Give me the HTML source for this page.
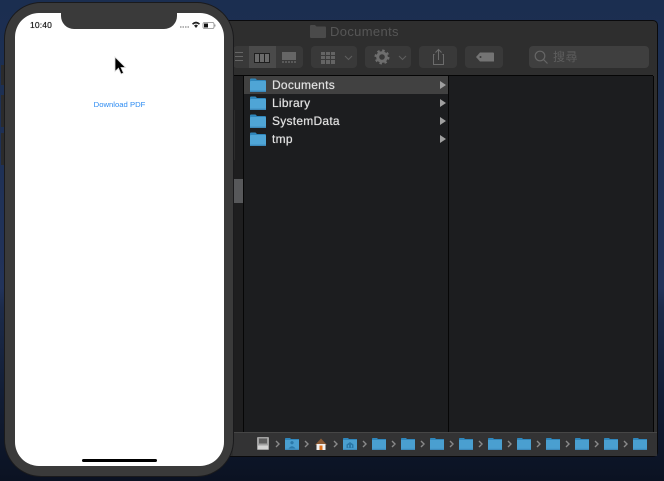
<!DOCTYPE html>
<html>
<head>
<meta charset="utf-8">
<style>
html,body{margin:0;padding:0}
body{width:664px;height:481px;position:relative;overflow:hidden;background:linear-gradient(180deg,#1b2e50 0,#22335a 60%,#1c2b4a 64%,#111c33 84%,#0b1222 100%);font-family:"Liberation Sans","Noto Sans CJK SC",sans-serif}
.a{position:absolute}
.row{position:absolute;left:244px;width:204px;height:18px;color:#e0e0e0;font-size:12px;line-height:18px;text-shadow:0 0 .6px #e0e0e0}
.row span{position:absolute;left:28px;top:0;letter-spacing:.25px}
.row i{position:absolute;left:196px;top:5px;width:0;height:0;border-left:6px solid #a0a0a0;border-top:4px solid transparent;border-bottom:4px solid transparent}
.btn{position:absolute;top:46px;height:22px;background:#393939;border-radius:4px}
</style>
</head>
<body>
<svg width="0" height="0" style="position:absolute"><defs>
<symbol id="f" viewBox="0 0 16 14"><path d="M0 1.500Q0 .5 1 .5H5.500L7 2H15Q16 2 16 3V13Q16 14 15 14H1Q0 14 0 13Z" fill="#2f86bb"/><rect y="3" width="16" height="11" rx="1" fill="#4fa5d6"/><rect y="12.600" width="16" height="1.400" fill="#3d8abb"/></symbol>
</defs></svg>

<!-- Finder window -->
<div class="a" style="left:200px;top:21px;width:457px;height:435px;background:#2e2e2e;border-radius:4px;box-shadow:0 0 0 1px #0a0a0c"></div>
<div class="a" style="left:233px;top:75px;width:420px;height:1px;background:#050505"></div>
<svg class="a" style="left:310px;top:25px" width="16" height="13"><path d="M0 1Q0 0 1 0H5L6.500 1.500H15Q16 1.500 16 2.500V12Q16 13 15 13H1Q0 13 0 12Z" fill="#4a4a4a"/></svg>
<div class="a" style="left:330px;top:24px;font-size:13px;line-height:16px;color:#565656;letter-spacing:.35px">Documents</div>

<!-- toolbar -->
<div class="btn" style="left:233px;width:70px;"></div>
<div class="a" style="left:249px;top:46px;width:27px;height:22px;background:#4a4a4a"></div>
<svg class="a" style="left:233px;top:46px" width="70" height="22">
<g fill="#666"><rect x="2" y="6" width="8" height="1"/><rect x="2" y="10" width="8" height="1"/><rect x="2" y="14" width="8" height="1"/></g>
<rect x="21.500" y="7.500" width="15" height="9" fill="#6a6a6a" stroke="#1e1e1e"/><path d="M26.500 7.500V16.500M31.500 7.500V16.500" stroke="#1e1e1e" fill="none"/>
<rect x="49" y="6" width="14" height="8" fill="#666"/><path d="M49 16H63" stroke="#666" stroke-dasharray="2 1" stroke-width="1.500"/>
</svg>
<div class="btn" style="left:311px;width:46px"></div>
<svg class="a" style="left:311px;top:46px" width="46" height="22">
<g fill="#646464"><rect x="10" y="6" width="4" height="3"/><rect x="15" y="6" width="4" height="3"/><rect x="20" y="6" width="4" height="3"/><rect x="10" y="10" width="4" height="3"/><rect x="15" y="10" width="4" height="3"/><rect x="20" y="10" width="4" height="3"/><rect x="10" y="14" width="4" height="4"/><rect x="15" y="14" width="4" height="4"/><rect x="20" y="14" width="4" height="4"/></g>
<path d="M34 10L37.500 13.500L41 10" fill="none" stroke="#5e5e5e" stroke-width="1.100"/></svg>
<div class="btn" style="left:365px;width:46px"></div>
<svg class="a" style="left:365px;top:46px" width="46" height="22">
<circle cx="17" cy="11" r="4.300" fill="none" stroke="#6e6e6e" stroke-width="3"/><circle cx="17" cy="11" r="6.500" fill="none" stroke="#6e6e6e" stroke-width="2" stroke-dasharray="2.500 2.600"/>
<path d="M34 10L37.500 13.500L41 10" fill="none" stroke="#5e5e5e" stroke-width="1.100"/></svg>
<div class="btn" style="left:419px;width:38px"></div>
<svg class="a" style="left:419px;top:46px" width="38" height="22" fill="none" stroke="#6c6c6c" stroke-width="1">
<path d="M15.500 8.500H14.500V18.500H24.500V8.500H23.500M19.500 14V4M16.500 6.500L19.500 3.500L22.500 6.500"/></svg>
<div class="btn" style="left:465px;width:38px"></div>
<svg class="a" style="left:465px;top:46px" width="38" height="22"><path d="M11 11L15 6.500H28Q29 6.500 29 7.500V15.500H15Z" fill="#747474"/><circle cx="15.500" cy="11" r="1" fill="#393939"/></svg>
<div class="btn" style="left:529px;width:120px;background:#3f3f3f"></div>
<svg class="a" style="left:529px;top:46px" width="30" height="22" fill="none" stroke="#666" stroke-width="1.200"><circle cx="11" cy="10" r="4.800"/><path d="M14.500 13.500L18.500 17.500"/></svg>
<div class="a" style="left:553px;top:50px;font-size:12px;line-height:14px;color:#5e5e5e;letter-spacing:.5px">搜尋</div>

<!-- content -->
<div class="a" style="left:233px;top:76px;width:420px;height:356px;background:#1c1d1f"></div>
<div class="a" style="left:233px;top:76px;width:10px;height:356px;background:#1e1e1f"></div>
<div class="a" style="left:234px;top:179px;width:9px;height:24px;background:#57585a"></div>
<div class="a" style="left:243px;top:76px;width:1px;height:356px;background:#060606"></div>
<div class="a" style="left:448px;top:76px;width:1px;height:356px;background:#060606"></div>
<div class="a" style="left:653px;top:76px;width:1px;height:356px;background:#050505"></div>
<div class="a" style="left:244px;top:76px;width:204px;height:18px;background:#414141"></div>

<div class="row" style="top:76px"><span>Documents</span><i></i></div>
<div class="row" style="top:94px"><span>Library</span><i></i></div>
<div class="row" style="top:112px"><span>SystemData</span><i></i></div>
<div class="row" style="top:130px"><span>tmp</span><i></i></div>
<svg class="a" style="left:250px;top:78px" width="16" height="14"><use href="#f"/></svg>
<svg class="a" style="left:250px;top:96px" width="16" height="14"><use href="#f"/></svg>
<svg class="a" style="left:250px;top:114px" width="16" height="14"><use href="#f"/></svg>
<svg class="a" style="left:250px;top:132px" width="16" height="14"><use href="#f"/></svg>

<!-- path bar -->
<div class="a" style="left:233px;top:432px;width:424px;height:24px;background:#333334;border-top:1px solid #464646;box-sizing:border-box"></div>
<svg class="a" style="left:244px;top:432px" width="413" height="24">
<defs><symbol id="s" viewBox="0 0 14 12"><path d="M0 .8Q0 0 .8 0H5L6 1H14V12H0Z" fill="#2f86bb"/><rect y="2" width="14" height="10" fill="#4a9fd0"/><rect y="10.800" width="14" height="1.200" fill="#3d8abb"/></symbol></defs>
<rect x="13" y="5" width="12" height="13" rx="1" fill="#a2a2a2"/><rect x="15" y="6.500" width="8" height="5" fill="#5e5e5e"/><rect x="14" y="13.500" width="10" height="3.500" fill="#d4d4d4"/>
<g fill="none" stroke="#8a8a8a" stroke-width="1.400">
<path d="M32 9L35 12L32 15M61 9L64 12L61 15M90 9L93 12L90 15M119 9L122 12L119 15M148 9L151 12L148 15M177 9L180 12L177 15M206 9L209 12L206 15M235 9L238 12L235 15M264 9L267 12L264 15M293 9L296 12L293 15M322 9L325 12L322 15M351 9L354 12L351 15M380 9L383 12L380 15"/>
</g>
<use href="#s" x="41" y="6" width="14" height="12"/>
<path d="M48 9a1.700 1.700 0 1 1-.01 0M44.500 16.500q3.500-4.500 7 0Z" fill="#2b78a8"/>
<path d="M71 13L77 6.500L83 13Z" fill="#8a5a35"/><rect x="72.500" y="12" width="9" height="6" fill="#f0f0f0"/><rect x="75.500" y="13.500" width="3" height="4.500" fill="#e0701a"/>
<use href="#s" x="99" y="6" width="14" height="12"/>
<path d="M102.500 16V12.500L106 10L109.500 12.500V16ZM104 13V15.500H105V13ZM107 13V15.500H108V13Z" fill="#2b78a8" fill-rule="evenodd"/>
<use href="#s" x="128" y="6" width="14" height="12"/>
<use href="#s" x="157" y="6" width="14" height="12"/>
<use href="#s" x="186" y="6" width="14" height="12"/>
<use href="#s" x="215" y="6" width="14" height="12"/>
<use href="#s" x="244" y="6" width="14" height="12"/>
<use href="#s" x="273" y="6" width="14" height="12"/>
<use href="#s" x="302" y="6" width="14" height="12"/>
<use href="#s" x="331" y="6" width="14" height="12"/>
<use href="#s" x="360" y="6" width="14" height="12"/>
<use href="#s" x="389" y="6" width="14" height="12"/>
</svg>

<!-- phone -->
<div class="a" style="left:1px;top:65px;width:5px;height:20px;background:#2b2b2b"></div>
<div class="a" style="left:1px;top:95px;width:5px;height:32px;background:#2b2b2b"></div>
<div class="a" style="left:1px;top:133px;width:5px;height:32px;background:#2b2b2b"></div>
<div class="a" style="left:232px;top:110px;width:3px;height:50px;background:#2b2b2b"></div>
<div class="a" style="left:5px;top:3px;width:228px;height:473px;background:#3a3a3a;border-radius:36px;box-shadow:0 0 0 1px #1a1a1c"></div>
<div class="a" style="left:15px;top:13px;width:209px;height:453px;background:#fff;border-radius:24px"></div>
<div class="a" style="left:61px;top:13px;width:116px;height:16px;background:#3a3a3a;border-radius:0 0 13px 13px"></div>
<div class="a" style="left:30px;top:20px;font-size:8.500px;line-height:11px;color:#222;letter-spacing:.15px;text-shadow:0 0 .5px #222">10:40</div>
<svg class="a" style="left:178px;top:20px" width="40" height="10">
<g fill="#b5b5b5"><rect x="2" y="6" width="1.500" height="2"/><rect x="4.500" y="6" width="1.500" height="2"/><rect x="7" y="6" width="1.500" height="2"/><rect x="9.500" y="6" width="1.500" height="2"/></g>
<path d="M14 3.500Q18-.2 22 3.500L21 4.700Q18 2.200 15 4.700ZM16 5.500Q18 3.800 20 5.500L18 8Z" fill="#222"/>
<rect x="25" y="2.500" width="11" height="6" rx="1.500" fill="none" stroke="#8a8a8a" stroke-width=".8"/><rect x="26" y="3.500" width="4" height="4" fill="#111"/><rect x="36.500" y="4.500" width="1" height="2" fill="#999"/>
</svg>
<div class="a" style="left:15px;top:99px;width:209px;text-align:center;font-size:7.700px;line-height:11px;color:#2e8cf2">Download PDF</div>
<svg class="a" style="left:112px;top:55px" width="16" height="22"><path d="M3 2V16.500L6.500 13.200L9 19L11.500 18L9 12.500H13.500Z" fill="#000" stroke="#ddd" stroke-width=".8"/></svg>
<div class="a" style="left:82px;top:459px;width:75px;height:3px;background:#000;border-radius:2px"></div>
</body>
</html>
